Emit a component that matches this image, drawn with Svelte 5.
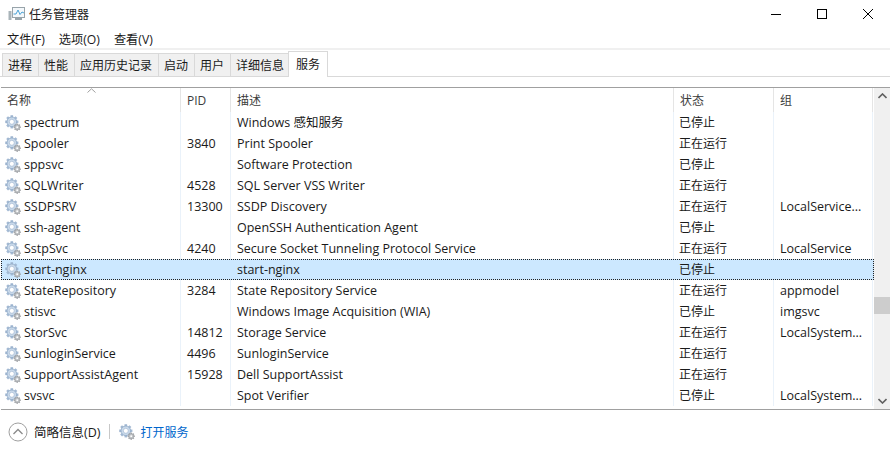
<script lang="ts">
  const menus = ['文件(F)', '选项(O)', '查看(V)']
  const tabs = ['进程', '性能', '应用历史记录', '启动', '用户', '详细信息', '服务']
  const columns = ['名称', 'PID', '描述', '状态', '组']

  const running = '正在运行'
  const stopped = '已停止'
  const services = [
    { name: 'spectrum', pid: '', desc: 'Windows 感知服务', status: stopped, group: '' },
    { name: 'Spooler', pid: '3840', desc: 'Print Spooler', status: running, group: '' },
    { name: 'sppsvc', pid: '', desc: 'Software Protection', status: stopped, group: '' },
    { name: 'SQLWriter', pid: '4528', desc: 'SQL Server VSS Writer', status: running, group: '' },
    { name: 'SSDPSRV', pid: '13300', desc: 'SSDP Discovery', status: running, group: 'LocalService...' },
    { name: 'ssh-agent', pid: '', desc: 'OpenSSH Authentication Agent', status: stopped, group: '' },
    { name: 'SstpSvc', pid: '4240', desc: 'Secure Socket Tunneling Protocol Service', status: running, group: 'LocalService' },
    { name: 'start-nginx', pid: '', desc: 'start-nginx', status: stopped, group: '', selected: true },
    { name: 'StateRepository', pid: '3284', desc: 'State Repository Service', status: running, group: 'appmodel' },
    { name: 'stisvc', pid: '', desc: 'Windows Image Acquisition (WIA)', status: stopped, group: 'imgsvc' },
    { name: 'StorSvc', pid: '14812', desc: 'Storage Service', status: running, group: 'LocalSystem...' },
    { name: 'SunloginService', pid: '4496', desc: 'SunloginService', status: running, group: '' },
    { name: 'SupportAssistAgent', pid: '15928', desc: 'Dell SupportAssist', status: running, group: '' },
    { name: 'svsvc', pid: '', desc: 'Spot Verifier', status: stopped, group: 'LocalSystem...' }
  ]

  // tooth angles for the gear icons
  const teeth = [0, 45, 90, 135]
</script>

{#snippet gear(size)}
  <svg class="gear" width={size} height={size} viewBox="0 0 16 16">
    <g transform="translate(6.8 6.8)">
      {#each teeth as a}
        <rect x="-1.3" y="-6.6" width="2.6" height="13.2" fill="#a3b9d3" transform="rotate({a})" />
      {/each}
      <circle r="4.8" fill="#c9d9ea" stroke="#8fa9c7" stroke-width="0.8" />
      <circle r="2.5" fill="#fff" stroke="#a3b9d3" stroke-width="0.7" />
    </g>
    <g transform="translate(12.2 12.2)">
      {#each teeth as a}
        <rect x="-0.8" y="-3.6" width="1.6" height="7.2" fill="#a2a5a9" transform="rotate({a})" />
      {/each}
      <circle r="2.5" fill="#c3c6c9" stroke="#9a9da1" stroke-width="0.6" />
      <circle r="0.9" fill="#fff" />
    </g>
  </svg>
{/snippet}

<div class="window">
  <header class="titlebar">
    <svg class="app-icon" width="17" height="16" viewBox="0 0 17 16">
      <rect x="0.5" y="5" width="3" height="9" fill="#a9b4b9" />
      <rect x="4.5" y="1.5" width="12" height="10" fill="#f4f8fb" stroke="#98a4aa" />
      <path d="M5.5 8 L8 8 L10 4 L12 8.5 L14 6 L16 7" fill="none" stroke="#4ba3d6" stroke-width="1" />
      <rect x="7" y="12" width="7" height="2" fill="#98a4aa" />
    </svg>
    <span class="title">任务管理器</span>
    <div class="controls">
      <svg width="12" height="12" viewBox="0 0 12 12"><path d="M1 6.5H11" stroke="#000" /></svg>
      <svg width="12" height="12" viewBox="0 0 12 12"><rect x="1.5" y="1.5" width="9" height="9" fill="none" stroke="#000" /></svg>
      <svg width="12" height="12" viewBox="0 0 12 12"><path d="M1 1L11 11M11 1L1 11" stroke="#000" /></svg>
    </div>
  </header>

  <nav class="menubar">
    {#each menus as m}<span>{m}</span>{/each}
  </nav>

  <div class="tabs">
    {#each tabs as t, i}
      <span class="tab" class:active={i === tabs.length - 1}>{t}</span>
    {/each}
  </div>

  <div class="table">
    <div class="rows-area">
      <div class="row head">
        {#each columns as c, i}
          <div class="cell">
            {#if i === 0}
              <svg class="sort" width="9" height="5" viewBox="0 0 9 5"><path d="M0.5 4.5L4.5 0.8L8.5 4.5" fill="none" stroke="#a0a0a0" /></svg>
            {/if}
            {c}
          </div>
        {/each}
      </div>
      {#each services as s}
        <div class="row" class:selected={s.selected}>
          <div class="cell name">{@render gear(16)}<span>{s.name}</span></div>
          <div class="cell">{s.pid}</div>
          <div class="cell">{s.desc}</div>
          <div class="cell status">{s.status}</div>
          <div class="cell">{s.group}</div>
        </div>
      {/each}
    </div>
    <div class="scrollbar">
      <svg width="9" height="6" viewBox="0 0 9 6"><path d="M0.5 5L4.5 1L8.5 5" fill="none" stroke="#606060" stroke-width="1.6" /></svg>
      <div class="track"><div class="thumb"></div></div>
      <svg width="9" height="6" viewBox="0 0 9 6"><path d="M0.5 1L4.5 5L8.5 1" fill="none" stroke="#606060" stroke-width="1.6" /></svg>
    </div>
  </div>

  <footer class="footer">
    <span class="less">
      <svg width="20" height="20" viewBox="0 0 20 20">
        <circle cx="10" cy="10" r="9" fill="none" stroke="#a0a0a0" />
        <path d="M5.5 12L10 7.5L14.5 12" fill="none" stroke="#8a8a8a" stroke-width="1.3" />
      </svg>
      简略信息(D)
    </span>
    <span class="divider"></span>
    <span class="open">{@render gear(16)}打开服务</span>
  </footer>
</div>

<style>
  :global(body) {
    margin: 0;
    background: #fff;
  }

  .window {
    width: 890px;
    height: 457px;
    overflow: hidden;
    display: flex;
    flex-direction: column;
    font-family: "Open Sans", "Noto Sans CJK SC", sans-serif;
    font-size: 12.5px;
    color: #1a1a1a;
  }

  .titlebar {
    height: 30px;
    display: flex;
    align-items: center;
    padding: 0 0 2px 8px;
    box-sizing: border-box;
    flex-shrink: 0;
  }

  .title {
    margin-left: 4px;
    color: #222;
    font-size: 12px;
  }

  .controls {
    margin-left: auto;
    display: flex;
    gap: 34px;
    padding-right: 16px;
    align-items: center;
  }

  .controls svg {
    display: block;
  }

  .menubar {
    height: 20px;
    display: flex;
    gap: 14px;
    padding: 0 0 1px 7px;
    box-sizing: border-box;
    align-items: center;
    border-bottom: 2px solid #f0f0f0;
    flex-shrink: 0;
    font-size: 12.2px;
  }

  .tabs {
    height: 26px;
    display: flex;
    align-items: flex-end;
    padding-left: 2px;
    border-bottom: 1px solid #d9d9d9;
    flex-shrink: 0;
    font-size: 12px;
  }

  .tab {
    height: 22px;
    line-height: 23px;
    padding: 0 6px 0 5px;
    background: #f0f0f0;
    border: 1px solid #d9d9d9;
    border-bottom: none;
    border-right: none;
  }

  .tab.active {
    position: relative;
    background: #fff;
    height: 25px;
    line-height: 25px;
    padding: 0 7px;
    border-right: 1px solid #d9d9d9;
    margin: 0 0 -1px -2px;
  }

  .table {
    margin-top: 10px;
    height: 321px;
    display: flex;
    border-top: 1px solid #a0a0a0;
    border-bottom: 1px solid #a0a0a0;
    margin-left: 1px;
    flex-shrink: 0;
  }

  .rows-area {
    flex: 1;
    min-width: 0;
  }

  .row {
    display: grid;
    grid-template-columns: 180px 50px 443px 100px 99px;
    height: 21px;
    box-sizing: border-box;
  }

  .row.head {
    height: 24px;
  }

  .cell {
    position: relative;
    padding-left: 6px;
    line-height: 21px;
    border-right: 1px solid #eaf2fa;
    white-space: nowrap;
    overflow: hidden;
  }

  .cell.status {
    font-size: 12px;
    padding-left: 5px;
  }

  .head .cell {
    line-height: 25px;
    color: #3c3c3c;
    border-right-color: #e5e5e5;
    font-size: 12px;
  }

  .sort {
    position: absolute;
    left: 86px;
    top: 0;
  }

  .name {
    display: flex;
    align-items: center;
    padding-left: 4px;
    gap: 3px;
  }

  .gear {
    flex-shrink: 0;
    display: block;
  }

  .row.selected {
    background: #cce8ff;
    outline: 1px dotted #222;
    outline-offset: -1px;
  }

  .row.selected .cell {
    border-right-color: transparent;
  }

  .scrollbar {
    width: 16px;
    background: #f0f0f0;
    display: flex;
    flex-direction: column;
    align-items: center;
    padding: 5px 0 5px;
    box-sizing: border-box;
  }

  .scrollbar svg {
    flex-shrink: 0;
    display: block;
  }

  .track {
    flex: 1;
    width: 100%;
    position: relative;
  }

  .thumb {
    position: absolute;
    top: 198px;
    left: 0;
    right: 0;
    height: 17px;
    background: #cdcdcd;
  }

  .footer {
    flex: 1;
    display: flex;
    align-items: center;
    padding: 0 0 4px 8px;
  }

  .less {
    display: flex;
    align-items: center;
    gap: 6px;
  }

  .divider {
    width: 1px;
    height: 15px;
    background: #c8c8c8;
    margin: 0 9px;
  }

  .open {
    display: flex;
    align-items: center;
    gap: 5px;
    color: #0066cc;
    font-size: 12px;
  }
</style>
